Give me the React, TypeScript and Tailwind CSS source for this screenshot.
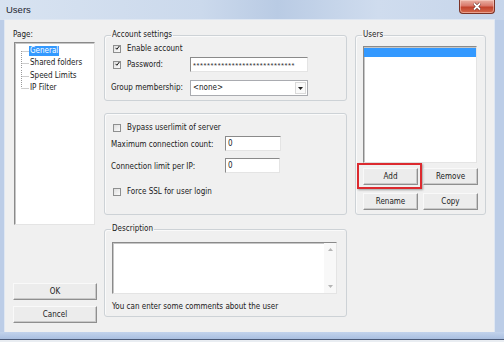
import type { ReactNode } from 'react'

const sunken =
  'border border-t-[#8a8a8a] border-l-[#8a8a8a] border-r-[#e4e4e4] border-b-[#e4e4e4] bg-white'

const btn =
  'flex items-center justify-center border border-t-[#f9f9f9] border-l-[#f9f9f9] border-r-[#8f8f8f] border-b-[#8f8f8f] bg-[#ececec] shadow-[inset_-1px_-1px_0_#c9c9c9] text-[#1b1b1b]'

function CheckBox({ checked }: { checked?: boolean }) {
  return (
    <div className="w-[8px] h-[8px] shrink-0 border border-[#8e8f8f] bg-[linear-gradient(135deg,#dedede,#fbfbfb)] flex items-center justify-center">
      {checked && (
        <svg width="8" height="8" viewBox="0 0 8 8" className="-mt-[1px] ml-[1px]">
          <path d="M1 3.8 L3 6 L7 0.8" fill="none" stroke="#111" strokeWidth="1.6" />
        </svg>
      )}
    </div>
  )
}

function CheckRow({ label, checked, className = '' }: { label: string; checked?: boolean; className?: string }) {
  return (
    <div className={`flex items-center ${className}`}>
      <CheckBox checked={checked} />
      <span className="ml-[6px]">{label}</span>
    </div>
  )
}

function Group({ legend, className = '', children }: { legend?: string; className?: string; children: ReactNode }) {
  return (
    <fieldset className={`border border-[#cdd2d6] rounded-[3px] shadow-[inset_1px_1px_0_#fafafa] ${className}`}>
      {legend && <legend className="ml-[6px] px-[1px] h-[10px] leading-[10px]">{legend}</legend>}
      {children}
    </fieldset>
  )
}

function TreeLine({ kind }: { kind: 'first' | 'mid' | 'last' }) {
  const y1 = kind === 'first' ? 6 : 0
  const y2 = kind === 'last' ? 6 : 12
  return (
    <svg width="8" height="12" viewBox="0 0 8 12" className="shrink-0">
      <line x1="0.5" y1={y1} x2="0.5" y2={y2} stroke="#9a9a9a" strokeDasharray="1 1" />
      <line x1="0.5" y1="6.5" x2="8" y2="6.5" stroke="#9a9a9a" strokeDasharray="1 1" />
    </svg>
  )
}

const pages = ['General', 'Shared folders', 'Speed Limits', 'IP Filter']

export default function App() {
  return (
    <div className="w-[504px] h-[342px] flex flex-col overflow-hidden bg-[#bccde7] font-['DejaVu_Sans_Condensed','Liberation_Sans',Arial,sans-serif] text-[8px] text-[#1a1a1a] select-none">
      {/* title bar */}
      <div className="h-[20px] flex bg-[linear-gradient(90deg,#d8e3f1_0%,#cbd9ec_40%,#b9cbe4_55%,#cfdcee_75%,#c6d5ea_100%)]">
        <span className="ml-[6px] mt-[4px] font-['Liberation_Sans',Arial,sans-serif] text-[9.5px] leading-[11px] text-[#1e2530]">Users</span>
        <div className="ml-auto mr-[9px] w-[36px] h-[14px] rounded-b-[4px] border border-t-0 border-[#7b3326] bg-[linear-gradient(180deg,#eab2a4_0%,#d9786a_45%,#c2432c_55%,#d56a4e_100%)] flex items-center justify-center shadow-[inset_0_0_0_1px_rgba(255,220,210,0.5)]">
          <svg width="10" height="9" viewBox="0 0 10 9">
            <path d="M2 1.5 L8 7.5 M8 1.5 L2 7.5" stroke="#5a1a12" strokeWidth="3" />
            <path d="M2 1.5 L8 7.5 M8 1.5 L2 7.5" stroke="#ffffff" strokeWidth="1.8" />
          </svg>
        </div>
      </div>

      {/* client area */}
      <div className="ml-[5px] w-[489px] h-[312px] bg-[#f0f0f0] shadow-[0_0_0_1px_#dfe7f2] flex">
        {/* left column */}
        <div className="ml-[8px] pt-[10px] w-[84px] flex flex-col">
          <div className="h-[10px] leading-[10px]">Page:</div>
          <div className={`mt-[2px] ml-[1px] w-[81px] h-[183px] ${sunken} shadow-[inset_1px_1px_0_#c6c6c6] pt-[2px] pl-[6px]`}>
            {pages.map((p, i) => (
              <div key={p} className="h-[12.3px] flex items-center">
                <TreeLine kind={i === 0 ? 'first' : i === pages.length - 1 ? 'last' : 'mid'} />
                <span
                  className={`px-[1px] h-[10px] leading-[10px] whitespace-nowrap ${
                    i === 0 ? 'bg-[#3399ff] text-white' : ''
                  }`}
                >
                  {p}
                </span>
              </div>
            ))}
          </div>
          <div className={`mt-[58px] w-[84px] h-[17px] ${btn}`}>OK</div>
          <div className={`mt-[6px] w-[84px] h-[17px] ${btn}`}>Cancel</div>
        </div>

        {/* right part */}
        <div className="ml-[7px] pt-[10px] flex flex-col">
          <div className="flex">
            <div className="w-[243px] flex flex-col">
              <Group legend="Account settings" className="h-[71px]">
                <div className="pl-[8px] pt-[2px]">
                  <CheckRow label="Enable account" checked className="h-[13px]" />
                  <div className="mt-[2px] h-[15px] flex items-center">
                    <CheckRow label="Password:" checked className="w-[77px]" />
                    <div className={`w-[118px] h-[15px] ${sunken} flex items-center pl-[2px] overflow-hidden`}>
                      <span className="tracking-[0.6px] text-[7.5px] text-[#333] leading-[8px] pt-[2px] font-['Liberation_Sans',Arial,sans-serif]">
                        *****************************
                      </span>
                    </div>
                  </div>
                  <div className="mt-[8px] h-[16px] flex items-center -ml-[2px]">
                    <span className="w-[79px]">Group membership:</span>
                    <div className="w-[118px] h-[16px] border border-[#a9abb0] bg-white flex items-center pl-[2px]">
                      <span>&lt;none&gt;</span>
                      <div className="ml-auto mr-[1px] w-[11px] h-[12px] border border-[#dadada] bg-[#fafafa] flex items-center justify-center">
                        <svg width="5" height="3" viewBox="0 0 5 3">
                          <path d="M0 0 H5 L2.5 3 Z" fill="#222" />
                        </svg>
                      </div>
                    </div>
                  </div>
                </div>
              </Group>

              <Group className="mt-[12px] h-[102px]">
                <div className="pl-[6px]">
                  <CheckRow label="Bypass userlimit of server" className="mt-[8px] h-[12px] ml-[2px]" />
                  <div className="mt-[2px] h-[15px] flex items-center">
                    <span className="w-[114px] pt-[3px]">Maximum connection count:</span>
                    <div className={`w-[56px] h-[15px] ${sunken} flex items-center pl-[2px]`}>0</div>
                  </div>
                  <div className="mt-[7px] h-[15px] flex items-center">
                    <span className="w-[114px] pt-[2px]">Connection limit per IP:</span>
                    <div className={`w-[55px] h-[15px] ${sunken} flex items-center pl-[2px]`}>0</div>
                  </div>
                  <CheckRow label="Force SSL for user login" className="mt-[13px] h-[12px] ml-[2px]" />
                </div>
              </Group>
            </div>

            <Group legend="Users" className="ml-[8px] w-[131px] h-[185px]">
              <div className={`mt-[6px] ml-[7px] w-[114px] h-[117px] ${sunken} shadow-[inset_1px_1px_0_#c6c6c6] pt-[1px]`}>
                <div className="h-[9px] bg-[#3399ff]" />
              </div>
              <div className="mt-[5px] ml-[7px] flex gap-[5px]">
                <div className="relative">
                  <div className={`w-[55px] h-[17px] ${btn}`}>Add</div>
                  <div className="absolute -left-[6px] -top-[5px] w-[65px] h-[26px] border-2 border-[#dc2a2f] shadow-[1px_1px_2px_rgba(0,0,0,0.35)]" />
                </div>
                <div className={`w-[55px] h-[17px] ${btn}`}>Remove</div>
              </div>
              <div className="mt-[8px] ml-[7px] flex gap-[5px]">
                <div className={`w-[55px] h-[17px] ${btn}`}>Rename</div>
                <div className={`w-[55px] h-[17px] ${btn}`}>Copy</div>
              </div>
            </Group>
          </div>

          <Group legend="Description" className="mt-[9px] w-[243px] h-[93px]">
            <div className={`mt-[8px] ml-[7px] w-[225px] h-[52px] ${sunken} shadow-[inset_1px_1px_0_#c6c6c6] flex`}>
              <div className="ml-auto w-[12px] h-full bg-[#f8f8f8] flex flex-col items-center justify-between py-[5px]">
                <svg width="5" height="3" viewBox="0 0 5 3">
                  <path d="M0 3 H5 L2.5 0 Z" fill="#b5b5b5" />
                </svg>
                <svg width="5" height="3" viewBox="0 0 5 3">
                  <path d="M0 0 H5 L2.5 3 Z" fill="#b5b5b5" />
                </svg>
              </div>
            </div>
            <div className="mt-[8px] ml-[7px] h-[10px] leading-[10px]">You can enter some comments about the user</div>
          </Group>
        </div>
      </div>

      {/* bottom frame */}
      <div className="flex-1 flex flex-col">
        <div className="h-[7px] bg-[linear-gradient(180deg,#c2d3ec,#aabfe0)]" />
        <div className="h-[1px] bg-[#4b5a78]" />
        <div className="flex-1 bg-[#e9edf2]" />
      </div>
    </div>
  )
}
